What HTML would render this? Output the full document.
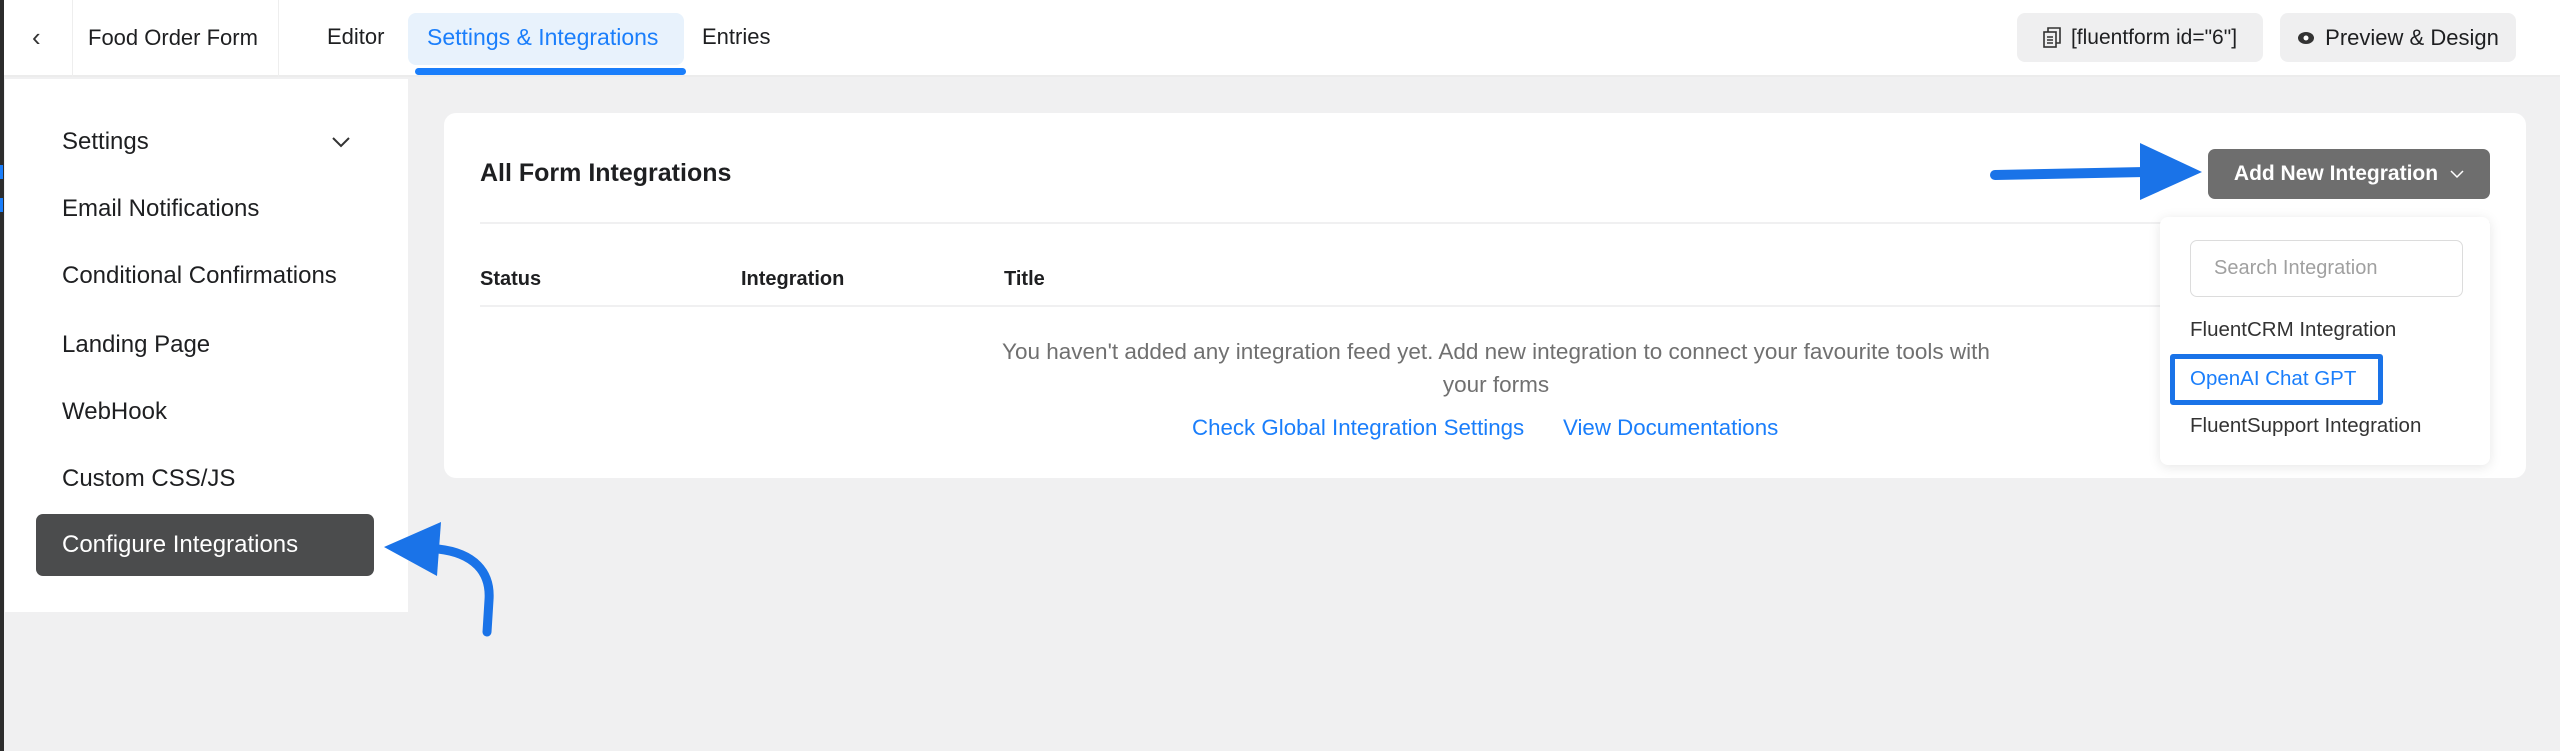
<!DOCTYPE html>
<html><head><meta charset="utf-8"><style>
*{box-sizing:border-box;margin:0;padding:0}
body{width:2560px;height:751px;overflow:hidden;background:#f0f0f1;font-family:"Liberation Sans",sans-serif;position:relative;color:#1e1f21}
.abs{position:absolute;white-space:nowrap}
#hdr{position:absolute;left:0;top:0;width:2560px;height:77px;background:#fff;border-bottom:2px solid #ececec}
.lb{position:absolute;left:0;top:0;width:4px;height:751px;background:#2c2c2c}
.menu{font-size:24px;color:#1e1f21}
.btn{position:absolute;background:#efeff0;border-radius:8px;font-size:21px;color:#1e1f21;display:flex;align-items:center;justify-content:center;gap:10px}
</style></head><body>
<div id="hdr">
 <div class="abs" style="left:32px;top:22px;font-size:26px;color:#333">&#8249;</div>
 <div style="position:absolute;left:72px;top:0;width:1px;height:77px;background:#eee"></div>
 <div class="abs" style="left:88px;top:25px;font-size:22px">Food Order Form</div>
 <div style="position:absolute;left:278px;top:0;width:1px;height:77px;background:#eee"></div>
 <div class="abs" style="left:327px;top:24px;font-size:22px">Editor</div>
 <div style="position:absolute;left:408px;top:13px;width:276px;height:52px;background:#e8f2fc;border-radius:8px"></div>
 <div class="abs" style="left:427px;top:24px;font-size:23px;color:#1a7efb">Settings &amp; Integrations</div>
 <div style="position:absolute;left:415px;top:68px;width:271px;height:7px;background:#1a7efb;border-radius:4px"></div>
 <div class="abs" style="left:702px;top:24px;font-size:22px">Entries</div>
 <div class="btn" style="left:2017px;top:13px;width:246px;height:49px">
  <svg width="18" height="22" viewBox="0 0 18 22"><rect x="1" y="5" width="12" height="15" fill="none" stroke="#333" stroke-width="1.6"/><path d="M5 5V1h12v15h-4" fill="none" stroke="#333" stroke-width="1.6"/><path d="M4 10h6M4 13h6M4 16h6" stroke="#333" stroke-width="1.4"/></svg>
  <span>[fluentform id="6"]</span></div>
 <div class="btn" style="left:2280px;top:13px;width:236px;height:49px;font-size:22px">
  <svg width="18" height="14" viewBox="0 0 18 14"><ellipse cx="9" cy="7" rx="8" ry="6" fill="#333"/><circle cx="9" cy="7" r="2.5" fill="#fff"/></svg>
  <span>Preview &amp; Design</span></div>
</div>
<div class="lb"></div>
<div style="position:absolute;left:0;top:165px;width:3px;height:14px;background:#1a7efb"></div>
<div style="position:absolute;left:0;top:198px;width:3px;height:14px;background:#1a7efb"></div>

<div style="position:absolute;left:5px;top:79px;width:403px;height:533px;background:#fff"></div>
<div class="abs menu" style="left:62px;top:128px">Settings</div>
<svg class="abs" style="left:331px;top:136px" width="20" height="12" viewBox="0 0 20 12"><path d="M2 2l8 8 8-8" fill="none" stroke="#333" stroke-width="2"/></svg>
<div class="abs menu" style="left:62px;top:195px">Email Notifications</div>
<div class="abs menu" style="left:62px;top:262px">Conditional Confirmations</div>
<div class="abs menu" style="left:62px;top:331px">Landing Page</div>
<div class="abs menu" style="left:62px;top:398px">WebHook</div>
<div class="abs menu" style="left:62px;top:465px">Custom CSS/JS</div>
<div style="position:absolute;left:36px;top:514px;width:338px;height:62px;background:#4b4c4d;border-radius:7px"></div>
<div class="abs menu" style="left:62px;top:531px;color:#fff">Configure Integrations</div>

<div style="position:absolute;left:444px;top:113px;width:2082px;height:365px;background:#fff;border-radius:12px"></div>
<div class="abs" style="left:480px;top:159px;font-size:25px;font-weight:bold">All Form Integrations</div>
<div style="position:absolute;left:480px;top:222px;width:2010px;height:2px;background:#f0f0f1"></div>
<div class="abs" style="left:480px;top:268px;font-size:20px;font-weight:bold">Status</div>
<div class="abs" style="left:741px;top:268px;font-size:20px;font-weight:bold">Integration</div>
<div class="abs" style="left:1004px;top:268px;font-size:20px;font-weight:bold">Title</div>
<div style="position:absolute;left:480px;top:305px;width:1680px;height:2px;background:#f0f0f1"></div>
<div style="position:absolute;left:850px;top:335px;width:1292px;text-align:center;font-size:22.5px;color:#707070;line-height:33px">You haven't added any integration feed yet. Add new integration to connect your favourite tools with<br>your forms</div>
<div class="abs" style="left:1192px;top:415px;font-size:22.3px;color:#1a7efb">Check Global Integration Settings</div>
<div class="abs" style="left:1563px;top:415px;font-size:22.3px;color:#1a7efb">View Documentations</div>

<div style="position:absolute;left:2208px;top:149px;width:282px;height:50px;background:#6e6e6e;border-radius:7px;color:#fff;font-size:21px;font-weight:bold;display:flex;align-items:center;justify-content:center;gap:12px"><span>Add New Integration</span><svg width="14" height="9" viewBox="0 0 14 9"><path d="M1 1l6 6 6-6" fill="none" stroke="#fff" stroke-width="1.5"/></svg></div>

<div style="position:absolute;left:2160px;top:217px;width:330px;height:248px;background:#fff;border-radius:8px;box-shadow:0 2px 12px rgba(0,0,0,.1)"></div>
<div style="position:absolute;left:2190px;top:240px;width:273px;height:57px;border:1px solid #dcdcdc;border-radius:7px"></div>
<div class="abs" style="left:2214px;top:257px;font-size:20px;color:#a0a0a0">Search Integration</div>
<div class="abs" style="left:2190px;top:318px;font-size:20.5px;color:#333">FluentCRM Integration</div>
<div style="position:absolute;left:2170px;top:354px;width:213px;height:51px;border:5px solid #1a73e8;border-radius:3px"></div>
<div class="abs" style="left:2190px;top:367px;font-size:20.5px;color:#1a7efb">OpenAI Chat GPT</div>
<div class="abs" style="left:2190px;top:414px;font-size:20.5px;color:#333">FluentSupport Integration</div>

<svg style="position:absolute;left:0;top:0" width="2560" height="751">
 <path d="M1995 175 L2145 172" stroke="#1a73e8" stroke-width="10" stroke-linecap="round" fill="none"/>
 <polygon points="2140,143 2202,172 2140,200" fill="#1a73e8"/>
 <path d="M487 632 L489 600 C491 572 474 553 438 549" stroke="#1a73e8" stroke-width="9" stroke-linecap="round" fill="none"/>
 <polygon points="384,547 441,522 437,576" fill="#1a73e8"/>
</svg>
</body></html>
